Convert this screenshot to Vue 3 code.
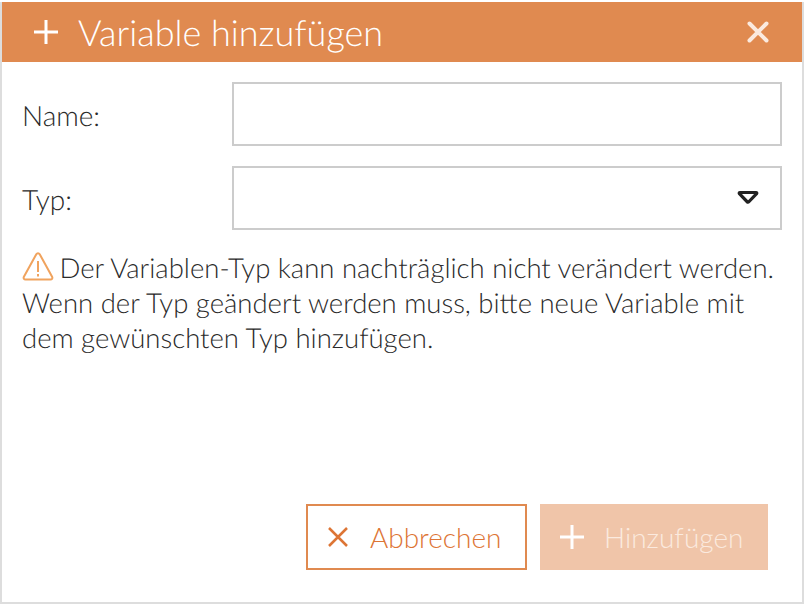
<template>
  <div class="dialog">
    <header class="head">
      <svg class="head-plus" width="26" height="26" viewBox="0 0 26 26">
        <path d="M13 1v24M1 13h24" stroke="#fff" stroke-width="3" fill="none" />
      </svg>
      <h1 class="title">Variable hinzufügen</h1>
      <svg class="head-close" width="22" height="22" viewBox="0 0 22 22">
        <path d="M2.500 2.500l17 17M19.500 2.500l-17 17" stroke="#fbeadf" stroke-width="4" stroke-linecap="round" fill="none" />
      </svg>
    </header>

    <main class="body">
      <form class="form" @submit.prevent>
        <label class="row">
          <span class="label">Name:</span>
          <input v-model="name" class="field" type="text" />
        </label>
        <label class="row">
          <span class="label">Typ:</span>
          <div class="field select">
            <svg width="22" height="16" viewBox="0 0 22 16">
              <path d="M3 2.500h16c.8 0 1 .7.600 1.200l-8 8.300c-.3.300-.9.300-1.200 0l-8-8.300C2 3.200 2.200 2.500 3 2.500z" stroke="#222" stroke-width="3.200" stroke-linejoin="round" fill="none" />
            </svg>
          </div>
        </label>
      </form>

      <p class="hint">
        <svg class="warn" width="32" height="30" viewBox="0 0 32 30">
          <path d="M14.300 3.200c.8-1.400 2.600-1.400 3.400 0l12.400 22.600c.7 1.300-.1 2.700-1.600 2.700H3.500c-1.500 0-2.300-1.400-1.600-2.700z" stroke="#f0a35e" stroke-width="2" stroke-linejoin="round" fill="none" />
          <path d="M16 10v11M16 23v2.500" stroke="#f0a35e" stroke-width="2" fill="none" />
        </svg>
        Der Variablen-Typ kann nachträglich nicht verändert werden. Wenn der Typ geändert werden muss, bitte neue Variable mit dem gewünschten Typ hinzufügen.
      </p>

      <div class="actions">
        <button class="btn cancel" type="button">
          <svg width="22" height="22" viewBox="0 0 22 22">
            <path d="M2 2l18 18M20 2L2 20" stroke="#dd7535" stroke-width="2.500" fill="none" />
          </svg>
          Abbrechen
        </button>
        <button class="btn add" type="button" disabled>
          <svg width="26" height="26" viewBox="0 0 26 26">
            <path d="M13 1v24M1 13h24" stroke="#fff" stroke-width="3" fill="none" />
          </svg>
          Hinzufügen
        </button>
      </div>
    </main>
  </div>
</template>

<script setup>
import { ref } from 'vue'

const name = ref('')
</script>

<style>
html,
body {
  margin: 0;
  background: #fff;
}
</style>

<style scoped>
.dialog {
  box-sizing: border-box;
  width: 804px;
  height: 602px;
  margin-top: 2px;
  border: 2px solid #dddddd;
  border-top: none;
  background: #fff;
  display: flex;
  flex-direction: column;
  font-family: Lato, sans-serif;
  font-weight: 300;
  color: #2a2a2a;
  text-rendering: geometricPrecision;
}

.head {
  height: 60px;
  flex: none;
  background: #e08a50;
  color: #fff;
  display: flex;
  align-items: center;
  padding: 0 33px 0 31px;
}

.head-plus {
  margin-right: 19px;
}

.title {
  flex: 1;
  margin: 0;
  font-size: 36px;
  font-weight: 300;
}

.body {
  flex: 1;
  display: flex;
  flex-direction: column;
  padding: 20px 20px 32px;
}

.form {
  display: flex;
  flex-direction: column;
  gap: 20px;
}

.row {
  display: grid;
  grid-template-columns: 210px 550px;
  align-items: center;
}

.label {
  font-size: 28px;
  padding-top: 2px;
}

.field {
  box-sizing: border-box;
  width: 100%;
  height: 64px;
  border: 2px solid #cccccc;
  background: #fff;
  outline: none;
}

.select {
  display: flex;
  align-items: center;
  justify-content: flex-end;
  padding-right: 21px;
}

.hint {
  margin: 20px 0 0;
  font-size: 27.5px;
  line-height: 35px;
  width: 770px;
}

.warn {
  vertical-align: -3px;
  margin-right: -2px;
}

.actions {
  margin-top: auto;
  display: flex;
  justify-content: flex-end;
  gap: 13px;
  padding-right: 14px;
}

.btn {
  box-sizing: border-box;
  height: 66px;
  display: flex;
  align-items: center;
  font-family: inherit;
  font-weight: 300;
  font-size: 28px;
  background: #fff;
}

.cancel {
  width: 221px;
  border: 2px solid #e08a50;
  color: #dd7535;
  padding: 0 0 0 19px;
  gap: 21px;
}

.add {
  width: 228px;
  border: none;
  background: #f0c5a9;
  color: #fbeadf;
  padding: 0 0 0 19px;
  gap: 19px;
}
</style>
